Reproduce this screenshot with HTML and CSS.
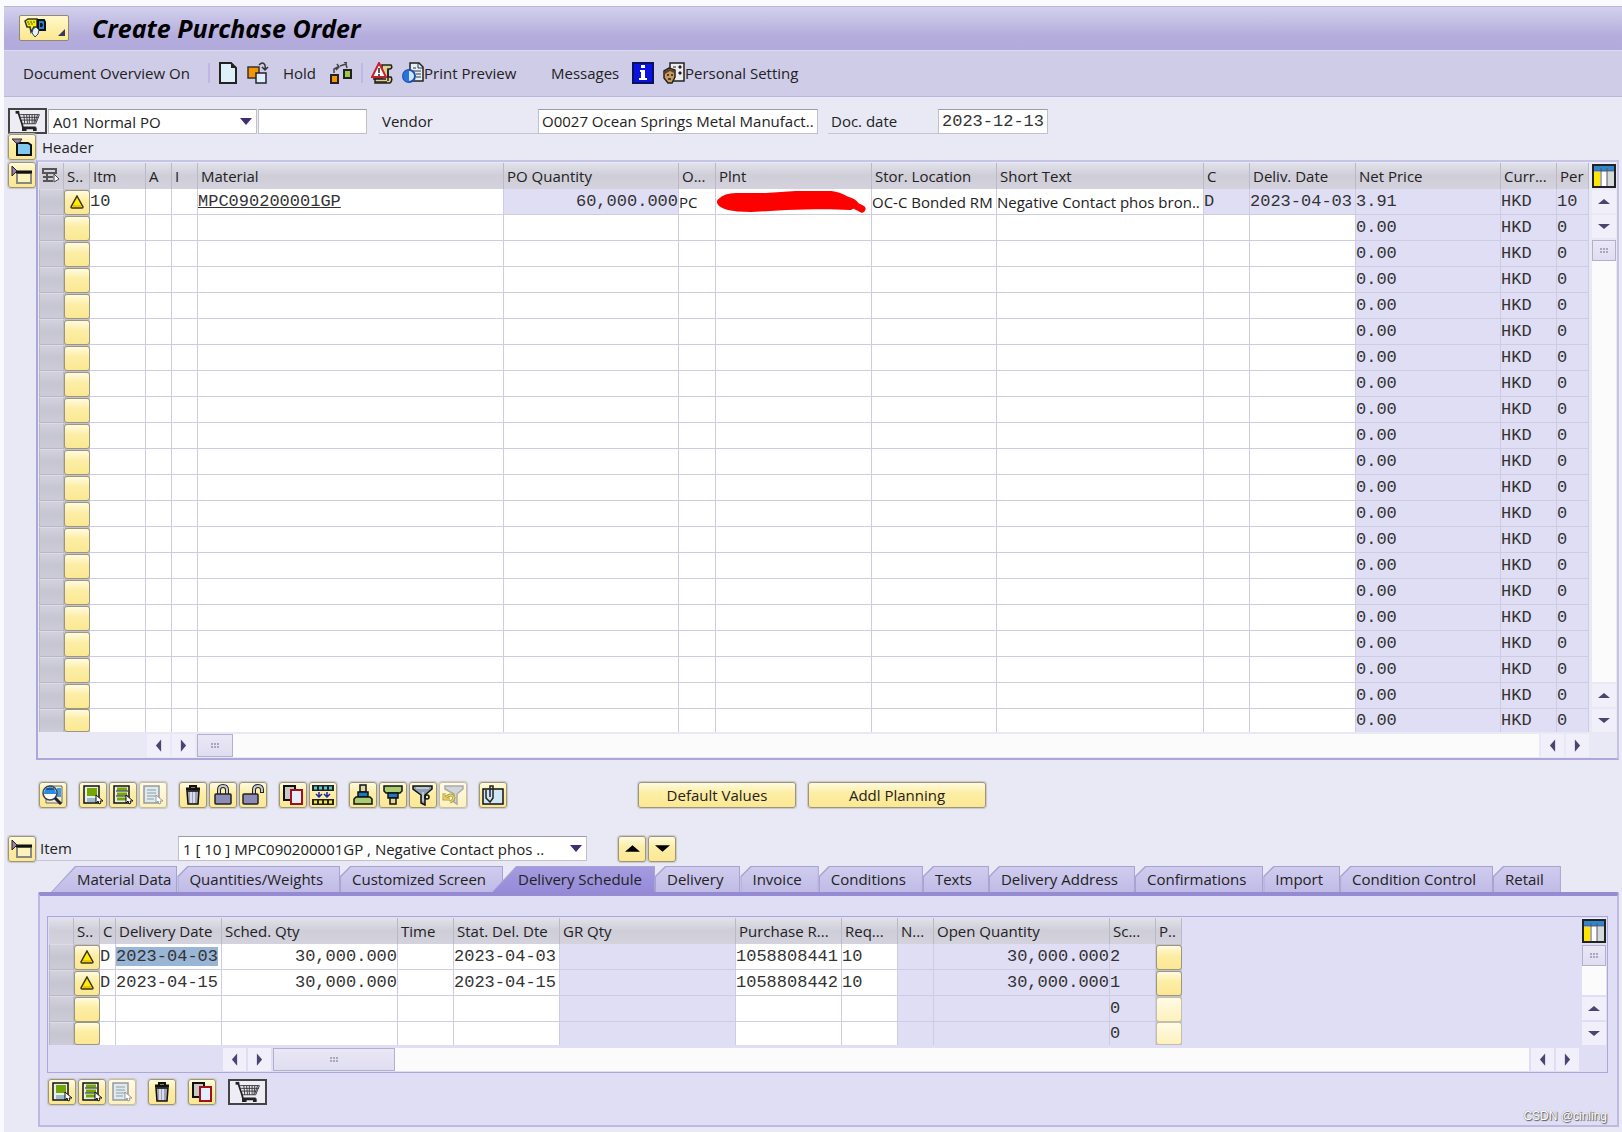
FILE: index.html
```html
<!DOCTYPE html>
<html lang="en">
<head>
  <meta charset="UTF-8">
  <meta name="viewport" content="width=device-width, initial-scale=1.0">
  <title>Create Purchase Order</title>
  <link rel="stylesheet" href="styles.css">
</head>
<body>
  <!-- icon set -->
  <svg class="sprite" aria-hidden="true">
    <symbol id="i-cursor" viewBox="0 0 8 11"><path d="M1 1v8l2-2 1 3 2-1-1-2h3z" fill="#fff" stroke="#111"/></symbol>
    <symbol id="i-services" viewBox="0 0 22 20">
      <path d="M1 3l3-2h9v8h-3l-3 5-1-5H3z" fill="#f5f000" stroke="#333" stroke-width="1.5"/>
      <path d="M3 4h8M4 6h6" stroke="#555" stroke-dasharray="2 1"/>
      <path d="M14 2h6l1 2v8h-7z" fill="#2a7de0" stroke="#111" stroke-width="2"/>
      <path d="M16 5h2l1 2-1 2h-2z" fill="#111"/>
      <path d="M9 11l3-2 3 3-1 4-3 3-3-4z" fill="#e8f2fa" stroke="#345"/>
    </symbol>
    <symbol id="i-new" viewBox="0 0 22 22"><path d="M3 1h11l5 5v15H3z" fill="#dff0f8" stroke="#222" stroke-width="2"/><path d="M14 1v5h5z" fill="#222"/></symbol>
    <symbol id="i-other" viewBox="0 0 22 22">
      <rect x="1" y="5" width="11" height="11" fill="#f79400" stroke="#333" stroke-width="1.5"/>
      <rect x="9" y="11" width="10" height="10" fill="#e3eefb" stroke="#223" stroke-width="1.5"/>
      <path d="M12 3c4-4 7-1 6 4M15 5l3 3 3-3" fill="none" stroke="#333" stroke-width="1.5"/>
    </symbol>
    <symbol id="i-check" viewBox="0 0 22 22">
      <rect x="1" y="13" width="7" height="8" fill="#f79400" stroke="#222" stroke-width="2"/>
      <rect x="14" y="8" width="7" height="8" fill="#9bc84a" stroke="#222" stroke-width="2"/>
      <path d="M4 11V7l4-2M7 2l2 3-3 3M10 4l6-2 1 4M14 0l3 1" fill="none" stroke="#444" stroke-width="1.5"/>
    </symbol>
    <symbol id="i-messages" viewBox="0 0 22 22">
      <path d="M11 3h9q2 3-1 4h-2v8h3q2 3-1 6H4v-5h7z" fill="#e0d28c" stroke="#222" stroke-width="1.5"/>
      <path d="M8 1l7 14H1z" fill="#fff" stroke="#c8202c" stroke-width="2"/>
      <path d="M8 6v5M8 12v2" stroke="#222" stroke-width="1.5"/>
      <path d="M2 17h13M4 20h12M17 7v12" stroke="#222" stroke-width="1.5"/>
    </symbol>
    <symbol id="i-preview" viewBox="0 0 22 22">
      <path d="M8 1h9l4 4v14H8z" fill="#e6f1f7" stroke="#222" stroke-width="1.5"/>
      <path d="M16 1v5h5M11 6h3M11 9h8M14 12h5M14 15h5" fill="none" stroke="#334"/>
      <circle cx="7" cy="14" r="6" fill="#cfe6fa" stroke="#1c4fae" stroke-width="2"/>
      <path d="M7 8a6 6 0 0 0 0 12z" fill="#2a74d8"/>
    </symbol>
    <symbol id="i-info" viewBox="0 0 22 22">
      <rect x="1" y="1" width="20" height="20" fill="#0a12e0" stroke="#0a1060" stroke-width="2"/>
      <path d="M9 3h4v3H9zM8 8h5v8h2v2H7v-2h2v-6H8z" fill="#fff"/>
    </symbol>
    <symbol id="i-personal" viewBox="0 0 22 22">
      <rect x="7" y="1" width="14" height="18" fill="#eee" stroke="#222" stroke-width="1.5"/>
      <path d="M10 5h3M16 4h2v2h-2zM16 10h2v2h-2z" fill="#222" stroke="#222"/>
      <path d="M1 9l5-3 6 2v7l-3 6H5l-4-5z" fill="#c99a5b" stroke="#222" stroke-width="1.5"/>
      <path d="M2 9l4-2 5 1v3l-4-2-5 3z" fill="#5c4426"/>
      <path d="M4 13h2M8 13h2M5 17h3" stroke="#222" stroke-width="1.5"/>
    </symbol>
    <symbol id="i-cart" viewBox="0 0 36 24">
      <rect x="5" y="1" width="4" height="3" fill="#222"/>
      <path d="M8 3l4 12 1 4h14" fill="none" stroke="#222" stroke-width="2"/>
      <path d="M10 5h21l-4 10H12M11 8h19M12 11h16M14 5l1 10M17 5l1 10M20 5v10M23 5v10M26 5l-1 10M29 5l-3 9" fill="none" stroke="#333" stroke-width="1"/>
      <path d="M12 19h16v4h-4v-2h-7v2h-5z" fill="#222"/>
    </symbol>
    <symbol id="i-expand" viewBox="0 0 22 20">
      <path d="M6 6h11l3 2v10H6z" fill="#7ec8f2" stroke="#111" stroke-width="2"/>
      <path d="M1 2h10l-3 4H5z" fill="#9a7fb5" stroke="#333"/>
    </symbol>
    <symbol id="i-collapse" viewBox="0 0 22 20">
      <path d="M6 8h14v10H6z" fill="#fdf3b8" stroke="#888" stroke-width="2"/>
      <path d="M5 7h16" stroke="#111" stroke-width="3"/>
      <path d="M1 1v10l5-5z" fill="#9a7fb5" stroke="#222"/>
    </symbol>
    <symbol id="i-selall" viewBox="0 0 18 18">
      <path d="M1 2h13v4H1zM1 10h10M1 14h10M5 6v8" fill="none" stroke="#555" stroke-width="2"/>
      <path d="M12 7l5 5-5 3z" fill="#fff" stroke="#444"/>
    </symbol>
    <symbol id="i-columns" viewBox="0 0 24 24">
      <rect x="1" y="1" width="22" height="22" fill="#fff" stroke="#222" stroke-width="2"/>
      <path d="M2 2h20v5H2z" fill="#2f86cc"/><path d="M2 8h6v14H2z" fill="#ffe600"/>
      <path d="M15 8h7v14h-7z" fill="#d5dadb"/>
      <path d="M9 4v18M15 4v18M2 7h20" stroke="#556"/>
    </symbol>
    <symbol id="i-warn" viewBox="0 0 16 14"><path d="M8 1l6 11q0 1-1 1H3q-1 0-1-1z" fill="#ffee00" stroke="#3a3320" stroke-width="1.5"/><path d="M4 11h8" stroke="#e09a00"/></symbol>
    <symbol id="i-detail" viewBox="0 0 22 22">
      <path d="M7 2h13v17H4v-5" fill="#f4ecc0" stroke="#667"/>
      <path d="M15 4h4v9h-4z" fill="#4a9ad8"/>
      <circle cx="8" cy="9" r="7" fill="#fff" stroke="#345" stroke-width="1.5"/>
      <path d="M2 9a6 6 0 0 1 12 0v1H2z" fill="#2a8ce0"/>
      <path d="M4 5h8" stroke="#124"/>
      <path d="M13 14l6 6" stroke="#223" stroke-width="3"/>
    </symbol>
    <symbol id="i-all" viewBox="0 0 22 22">
      <rect x="2" y="2" width="15" height="17" fill="#e8eef0" stroke="#111" stroke-width="1.5"/>
      <path d="M5 4h10v8H5z" fill="#74a800"/><path d="M5 15h9M5 17h9" stroke="#58a"/>
      <use href="#i-cursor" x="13" y="10" width="8" height="11"/>
    </symbol>
    <symbol id="i-block" viewBox="0 0 22 22">
      <rect x="2" y="2" width="15" height="17" fill="#e8eef0" stroke="#111" stroke-width="1.5"/>
      <path d="M5 5h10M5 10h10M5 15h9" stroke="#74a800" stroke-width="3"/>
      <path d="M4 7h12M4 12h12" stroke="#222"/>
      <use href="#i-cursor" x="13" y="10" width="8" height="11"/>
    </symbol>
    <symbol id="i-none" viewBox="0 0 22 22">
      <rect x="2" y="2" width="15" height="17" fill="#dfeaee" stroke="#999" stroke-width="1.5"/>
      <path d="M5 6h9M5 9h9M5 12h9M5 15h7" stroke="#a8b8c0" stroke-width="1.5"/>
      <path d="M14 11v8l2-2 1 3 2-1-1-2h3z" fill="#fff" stroke="#999"/>
    </symbol>
    <symbol id="i-trash" viewBox="0 0 22 22">
      <path d="M5 7h12l-1 13H6z" fill="#9fa3b4" stroke="#111" stroke-width="1.5"/>
      <path d="M9 8v11M12 8v11" stroke="#eef" stroke-width="1.5"/>
      <path d="M4 5h14" stroke="#111" stroke-width="3"/><path d="M8 4V2h6v2" fill="none" stroke="#111" stroke-width="2"/>
    </symbol>
    <symbol id="i-lock" viewBox="0 0 22 22">
      <path d="M7 10V6q0-4 4-4t4 4v4" fill="none" stroke="#222" stroke-width="4"/>
      <path d="M7 10V6q0-4 4-4t4 4v4" fill="none" stroke="#ccc" stroke-width="2"/>
      <rect x="3" y="10" width="16" height="10" rx="1" fill="#8d8bb8" stroke="#222" stroke-width="1.5"/>
    </symbol>
    <symbol id="i-unlock" viewBox="0 0 22 22">
      <path d="M12 10V6q0-4 4-4t4 4v3" fill="none" stroke="#222" stroke-width="4"/>
      <path d="M12 10V6q0-4 4-4t4 4v2" fill="none" stroke="#ccc" stroke-width="2"/>
      <rect x="1" y="10" width="15" height="10" rx="1" fill="#8d8bb8" stroke="#222" stroke-width="1.5"/>
    </symbol>
    <symbol id="i-copy" viewBox="0 0 22 22">
      <rect x="2" y="2" width="11" height="14" fill="#c8c8c8" stroke="#111" stroke-width="2"/>
      <rect x="9" y="6" width="11" height="14" fill="#e4eefb" stroke="#a30f1c" stroke-width="2"/>
    </symbol>
    <symbol id="i-distribute" viewBox="0 0 22 22">
      <path d="M0 1h22v6H0zM0 15h22v6H0z" fill="#222"/>
      <path d="M2 4h18" stroke="#58c8d8" stroke-width="3" stroke-dasharray="3 2"/>
      <path d="M2 18h18" stroke="#f4e83a" stroke-width="3" stroke-dasharray="3 2"/>
      <path d="M7 8v5M4 10l3 3 3-3M15 8v5M12 10l3 3 3-3" fill="none" stroke="#2222b0" stroke-width="1.5"/>
    </symbol>
    <symbol id="i-sortasc" viewBox="0 0 22 22">
      <rect x="8" y="1" width="6" height="7" fill="#ddd9a0" stroke="#111" stroke-width="1.5"/>
      <path d="M6 8h10v5H6z" fill="#1878c0" stroke="#111" stroke-width="1.5"/>
      <path d="M4 13h14l2 2v5H2v-5z" fill="#a8cc70" stroke="#111" stroke-width="1.5"/>
    </symbol>
    <symbol id="i-sortdesc" viewBox="0 0 22 22">
      <path d="M2 2h18v5l-2 2H4L2 7z" fill="#a8cc70" stroke="#111" stroke-width="1.5"/>
      <path d="M6 9h10v5H6z" fill="#1878c0" stroke="#111" stroke-width="1.5"/>
      <rect x="8" y="14" width="6" height="6" fill="#ddd9a0" stroke="#111" stroke-width="1.5"/>
    </symbol>
    <symbol id="i-filter" viewBox="0 0 22 22">
      <path d="M1 2h19v3l-7 6v10l-4-2v-8L1 5z" fill="#8fa0b4" stroke="#111" stroke-width="1.5"/>
      <path d="M4 4h13M11 8v9" stroke="#e8eef5"/><circle cx="15" cy="13" r="2" fill="none" stroke="#111" stroke-width="1.5"/>
    </symbol>
    <symbol id="i-unfilter" viewBox="0 0 22 22">
      <path d="M3 2h18v3l-6 5v10l-3-2v-8L3 5z" fill="#d3d6d8" stroke="#aaa" stroke-width="1.5"/>
      <path d="M2 9v6h6M3 14q7-6 9 0-1 3-4 4" fill="none" stroke="#b5a040" stroke-width="3"/>
      <path d="M2 9v6h6M3 14q7-6 9 0-1 3-4 4" fill="none" stroke="#f6ea80"/>
    </symbol>
    <symbol id="i-attach" viewBox="0 0 22 22">
      <path d="M1 5h20v15H1z" fill="#cfe6f4" stroke="#111" stroke-width="1.5"/>
      <path d="M4 6v8l4 4 3-4V2H8v11" fill="none" stroke="#222" stroke-width="1.5"/>
    </symbol>
    <symbol id="a-up" viewBox="0 0 14 8"><path d="M0 7L7 1l7 6z"/></symbol>
    <symbol id="a-down" viewBox="0 0 14 8"><path d="M0 1l7 6 7-6z"/></symbol>
    <symbol id="a-left" viewBox="0 0 8 14"><path d="M7 0L1 7l6 7z"/></symbol>
    <symbol id="a-right" viewBox="0 0 8 14"><path d="M1 0l6 7-6 7z"/></symbol>
  </svg>

  <div class="window">
    <header class="titlebar">
      <button class="menu-btn" aria-label="Services"><svg class="services"><use href="#i-services"/></svg><span class="corner"></span></button>
      <h1>Create Purchase Order</h1>
    </header>

    <nav class="toolbar">
      <button class="t-overview">Document Overview On</button>
      <span class="sep"></span>
      <button aria-label="Create" class="t-new"><svg class="icon"><use href="#i-new"/></svg></button>
      <button aria-label="Other purchase order" class="t-other"><svg class="icon"><use href="#i-other"/></svg></button>
      <button class="t-hold">Hold</button>
      <button aria-label="Check" class="t-check"><svg class="icon"><use href="#i-check"/></svg></button>
      <span class="sep"></span>
      <button aria-label="Display messages" class="t-msg"><svg class="icon"><use href="#i-messages"/></svg></button>
      <button class="t-preview"><svg class="icon"><use href="#i-preview"/></svg>Print Preview</button>
      <button class="t-messages">Messages</button>
      <button aria-label="Help" class="t-info"><svg class="icon"><use href="#i-info"/></svg></button>
      <button class="t-personal"><svg class="icon"><use href="#i-personal"/></svg>Personal Setting</button>
    </nav>

    <main>
      <form class="order-line">
        <button type="button" class="cart-btn" aria-label="Purchase order"><svg><use href="#i-cart"/></svg></button>
        <select class="order-type" aria-label="Order type"><option>A01 Normal PO</option></select>
        <input class="order-no" type="text" aria-label="Order number">
        <label class="vendor-label" for="vendor">Vendor</label>
        <input class="vendor" id="vendor" type="text" value="O0027 Ocean Springs Metal Manufact..">
        <label class="date-label" for="docDate">Doc. date</label>
        <input class="doc-date mono" id="docDate" type="text" value="2023-12-13">
      </form>

      <div class="header-line">
        <button class="btn" aria-label="Expand header"><svg class="icon"><use href="#i-expand"/></svg></button>
        <span>Header</span>
      </div>

      <section class="overview">
        <button class="btn" aria-label="Collapse items"><svg class="icon"><use href="#i-collapse"/></svg></button>
        <div class="frame">
          <div class="grid">
            <table class="items">
              <colgroup>
                <col class="w25"><col class="w26"><col class="w56"><col class="w26"><col class="w26"><col><col class="w175"><col class="w37"><col class="w156"><col class="w125"><col class="w207"><col class="w46"><col class="w106"><col class="w145"><col class="w56"><col class="w32">
              </colgroup>
              <thead>
                <tr>
                  <th><svg class="selall"><use href="#i-selall"/></svg></th><th>S..</th><th>Itm</th><th>A</th><th>I</th><th>Material</th><th>PO Quantity</th><th>O...</th><th>Plnt</th><th>Stor. Location</th><th>Short Text</th><th>C</th><th>Deliv. Date</th><th>Net Price</th><th>Curr...</th><th>Per</th>
                </tr>
              </thead>
              <tbody id="itemRows">
                <tr>
                  <td class="row-head"></td>
                  <td class="status"><button aria-label="Warning"><svg><use href="#i-warn"/></svg></button></td>
                  <td class="mono">10</td><td></td><td></td>
                  <td class="mono"><a href="#">MPC090200001GP</a></td>
                  <td class="mono num ro">60,000.000</td>
                  <td>PC</td>
                  <td><svg class="redacted" viewBox="0 0 152 24"><path d="M120 8Q138 10 140 16L146 19" fill="none" stroke="#f00" stroke-width="7" stroke-linecap="round"/><path d="M5 12Q10 7 20 7H50L80 5H115Q130 7 134 16L108 15L70 16L35 18Q8 18 5 12z" fill="#f00" stroke="#f00" stroke-width="8" stroke-linejoin="round"/></svg></td>
                  <td>OC-C Bonded RM</td><td>Negative Contact phos bron..</td>
                  <td class="mono ro">D</td><td class="mono ro">2023-04-03</td><td class="mono ro">3.91</td><td class="mono ro">HKD</td><td class="mono ro">10</td>
                </tr>
              </tbody>
            </table>
            <div class="vscroll">
              <button class="config" aria-label="Table settings"><svg><use href="#i-columns"/></svg></button>
              <button aria-label="Page up"><svg class="v"><use href="#a-up"/></svg></button>
              <button aria-label="Line down"><svg class="v"><use href="#a-down"/></svg></button>
              <div class="track"><div class="thumb"><span></span></div></div>
              <button aria-label="Line up"><svg class="v"><use href="#a-up"/></svg></button>
              <button aria-label="Page down"><svg class="v"><use href="#a-down"/></svg></button>
            </div>
          </div>
          <div class="hscroll">
            <button aria-label="Scroll left"><svg class="h"><use href="#a-left"/></svg></button>
            <button aria-label="Scroll right"><svg class="h"><use href="#a-right"/></svg></button>
            <div class="track"><div class="thumb"><span></span></div></div>
            <button aria-label="Scroll left"><svg class="h"><use href="#a-left"/></svg></button>
            <button aria-label="Scroll right"><svg class="h"><use href="#a-right"/></svg></button>
          </div>
        </div>
      </section>

      <div class="actions">
        <div class="group"><button class="btn" aria-label="Details"><svg class="icon"><use href="#i-detail"/></svg></button></div>
        <div class="group">
          <button class="btn" aria-label="Select all"><svg class="icon"><use href="#i-all"/></svg></button>
          <button class="btn" aria-label="Select block"><svg class="icon"><use href="#i-block"/></svg></button>
          <button class="btn off" aria-label="Deselect all"><svg class="icon"><use href="#i-none"/></svg></button>
        </div>
        <div class="group">
          <button class="btn" aria-label="Delete"><svg class="icon"><use href="#i-trash"/></svg></button>
          <button class="btn" aria-label="Lock"><svg class="icon"><use href="#i-lock"/></svg></button>
          <button class="btn" aria-label="Unlock"><svg class="icon"><use href="#i-unlock"/></svg></button>
        </div>
        <div class="group">
          <button class="btn" aria-label="Copy"><svg class="icon"><use href="#i-copy"/></svg></button>
          <button class="btn" aria-label="Distribute"><svg class="icon"><use href="#i-distribute"/></svg></button>
        </div>
        <div class="group">
          <button class="btn" aria-label="Sort ascending"><svg class="icon"><use href="#i-sortasc"/></svg></button>
          <button class="btn" aria-label="Sort descending"><svg class="icon"><use href="#i-sortdesc"/></svg></button>
          <button class="btn" aria-label="Filter"><svg class="icon"><use href="#i-filter"/></svg></button>
          <button class="btn off" aria-label="Delete filter"><svg class="icon"><use href="#i-unfilter"/></svg></button>
        </div>
        <div class="group"><button class="btn" aria-label="Attachments"><svg class="icon"><use href="#i-attach"/></svg></button></div>
        <button class="btn wide defaults">Default Values</button>
        <button class="btn wide planning">Addl Planning</button>
      </div>

      <div class="item-line">
        <button class="btn" aria-label="Collapse item"><svg class="icon"><use href="#i-collapse"/></svg></button>
        <label for="itemSelect">Item</label>
        <select id="itemSelect"><option>1 [ 10 ] MPC090200001GP , Negative Contact phos ..</option></select>
        <div class="group">
          <button class="btn" aria-label="Previous item"><svg class="nav"><use href="#a-up"/></svg></button>
          <button class="btn" aria-label="Next item"><svg class="nav"><use href="#a-down"/></svg></button>
        </div>
      </div>

      <section class="detail">
        <div class="tabs">
          <button class="first">Material Data</button><button>Quantities/Weights</button><button>Customized Screen</button><button class="active">Delivery Schedule</button><button>Delivery</button><button>Invoice</button><button>Conditions</button><button>Texts</button><button>Delivery Address</button><button>Confirmations</button><button>Import</button><button>Condition Control</button><button>Retail</button>
        </div>
        <div class="panel">
          <div class="frame">
            <div class="grid">
              <table class="schedule">
                <colgroup>
                  <col class="w25"><col class="w26"><col class="w16"><col class="w106"><col class="w176"><col class="w56"><col class="w106"><col class="w176"><col class="w106"><col class="w56"><col class="w36"><col class="w176"><col class="w46"><col class="w26">
                </colgroup>
                <thead>
                  <tr>
                    <th></th><th>S..</th><th>C</th><th>Delivery Date</th><th>Sched. Qty</th><th>Time</th><th>Stat. Del. Dte</th><th>GR Qty</th><th>Purchase R...</th><th>Req...</th><th>N...</th><th>Open Quantity</th><th>Sc...</th><th>P..</th>
                  </tr>
                </thead>
                <tbody>
                  <tr>
                    <td class="row-head"></td><td class="status"><button aria-label="Warning"><svg><use href="#i-warn"/></svg></button></td>
                    <td class="mono">D</td><td class="mono"><mark>2023-04-03</mark></td><td class="mono num">30,000.000</td><td></td><td class="mono">2023-04-03</td><td class="ro"></td><td class="mono">1058808441</td><td class="mono">10</td><td class="ro"></td><td class="mono num ro">30,000.000</td><td class="mono ro">2</td>
                    <td class="status ro"><button aria-label="Parameters"></button></td>
                  </tr>
                  <tr>
                    <td class="row-head"></td><td class="status"><button aria-label="Warning"><svg><use href="#i-warn"/></svg></button></td>
                    <td class="mono">D</td><td class="mono">2023-04-15</td><td class="mono num">30,000.000</td><td></td><td class="mono">2023-04-15</td><td class="ro"></td><td class="mono">1058808442</td><td class="mono">10</td><td class="ro"></td><td class="mono num ro">30,000.000</td><td class="mono ro">1</td>
                    <td class="status ro"><button aria-label="Parameters"></button></td>
                  </tr>
                  <tr>
                    <td class="row-head"></td><td class="status"><button aria-label="Status"></button></td>
                    <td></td><td></td><td></td><td></td><td></td><td class="ro"></td><td></td><td></td><td class="ro"></td><td class="ro"></td><td class="mono ro">0</td>
                    <td class="status ro"><button class="off" aria-label="Parameters"></button></td>
                  </tr>
                  <tr>
                    <td class="row-head"></td><td class="status"><button aria-label="Status"></button></td>
                    <td></td><td></td><td></td><td></td><td></td><td class="ro"></td><td></td><td></td><td class="ro"></td><td class="ro"></td><td class="mono ro">0</td>
                    <td class="status ro"><button class="off" aria-label="Parameters"></button></td>
                  </tr>
                </tbody>
              </table>
              <div class="vscroll">
                <button class="config" aria-label="Table settings"><svg><use href="#i-columns"/></svg></button>
                <div class="track"><div class="thumb"><span></span></div></div>
                <button aria-label="Line up"><svg class="v"><use href="#a-up"/></svg></button>
                <button aria-label="Line down"><svg class="v"><use href="#a-down"/></svg></button>
              </div>
            </div>
            <div class="hscroll">
              <button aria-label="Scroll left"><svg class="h"><use href="#a-left"/></svg></button>
              <button aria-label="Scroll right"><svg class="h"><use href="#a-right"/></svg></button>
              <div class="track"><div class="thumb"><span></span></div></div>
              <button aria-label="Scroll left"><svg class="h"><use href="#a-left"/></svg></button>
              <button aria-label="Scroll right"><svg class="h"><use href="#a-right"/></svg></button>
            </div>
          </div>
          <div class="actions">
            <div class="group">
              <button class="btn" aria-label="Select all"><svg class="icon"><use href="#i-all"/></svg></button>
              <button class="btn" aria-label="Select block"><svg class="icon"><use href="#i-block"/></svg></button>
              <button class="btn off" aria-label="Deselect all"><svg class="icon"><use href="#i-none"/></svg></button>
            </div>
            <button class="btn" aria-label="Delete"><svg class="icon"><use href="#i-trash"/></svg></button>
            <button class="btn" aria-label="Copy"><svg class="icon"><use href="#i-copy"/></svg></button>
            <button class="cart-btn" aria-label="Purchase requisition"><svg><use href="#i-cart"/></svg></button>
          </div>
        </div>
      </section>
    </main>
    <span class="credit">CSDN @cinling</span>
  </div>

  <script>
    const itemRows = document.getElementById('itemRows');

    // empty entry rows below the first item
    for (let i = 0; i < 20; i++) {
      itemRows.insertAdjacentHTML('beforeend', `
        <tr>
          <td class="row-head"></td>
          <td class="status"><button aria-label="Status"></button></td>
          ${'<td></td>'.repeat(11)}
          <td class="mono ro">0.00</td><td class="mono ro">HKD</td><td class="mono ro">0</td>
        </tr>
      `);
    }
  </script>
</body>
</html>
```
FILE: styles.css
```css
* {
  box-sizing: border-box;
}

body {
  margin: 0;
  padding: 6px 0 0 4px;
  background-color: #fafafe;
  color: #222;
  font-family: "Open Sans", "Noto Sans", sans-serif;
  font-size: 15px;
  line-height: 24px;
}

button, input, select {
  font: inherit;
  color: inherit;
  margin: 0;
}

button {
  padding: 0;
  border: none;
  background: none;
  cursor: pointer;
  white-space: nowrap;
}

svg {
  display: block;
  flex: none;
}

.sprite {
  position: absolute;
  width: 0;
  height: 0;
}

.icon {
  width: 22px;
  height: 22px;
}

.window {
  position: relative;
  min-height: calc(100vh - 6px);
  background-color: #e9e9f5;
}

.mono {
  color: #333;
  font-family: "Liberation Mono", monospace;
  font-size: 17px;
}

/* title and toolbar */
.titlebar {
  display: flex;
  align-items: center;
  gap: 23px;
  height: 44px;
  padding: 0 15px 2px;
  border-top: 1px solid #b9b4dc;
  background: linear-gradient(#d3d0ec, #b3acdc 70%, #b1aadb);
}

h1 {
  margin: 0;
  font-size: 25px;
  font-style: italic;
  line-height: 32px;
  color: #000;
}

.menu-btn {
  display: flex;
  justify-content: space-between;
  align-items: center;
  width: 50px;
  height: 26px;
  padding: 0 3px;
  border: 1px solid #8f8a78;
  border-radius: 2px;
  background: linear-gradient(#fff8cc, #fbe88e);
}

.services {
  width: 24px;
  height: 20px;
}

.corner {
  align-self: flex-end;
  margin-bottom: 4px;
  border-left: 7px solid transparent;
  border-bottom: 7px solid #3c3560;
}

.toolbar {
  display: flex;
  align-items: center;
  height: 47px;
  padding: 0 19px 1px;
  border-top: 1px solid #dddaf0;
  border-bottom: 1px solid #b9b5dd;
  background-color: #cfcce8;
}

.toolbar button {
  display: flex;
  align-items: center;
}

.sep {
  width: 2px;
  height: 20px;
  background-color: #bdb8e4;
}

.t-overview { width: 185px; }
.t-new { margin-left: 7px; }
.t-other { margin-left: 8px; }
.t-hold { width: 47px; margin-left: 14px; }
.t-check { margin-right: 9px; }
.t-msg { margin-left: 8px; }
.t-preview { width: 149px; margin-left: 9px; }
.t-messages { width: 81px; }
.t-personal { margin-left: 9px; }

/* yellow push buttons */
.btn, .status button {
  display: flex;
  justify-content: center;
  align-items: center;
  border: 1px solid #9b9682;
  border-radius: 3px;
  background: linear-gradient(#fffbe0, #fdeea6 40%, #fbe893);
  box-shadow: 0 0 1px 1px #c9c6c4;
}

.btn {
  width: 28px;
  height: 26px;
  flex: none;
}

.off, .status .off {
  border-color: #c4bfa6;
  background: linear-gradient(#fffbe6, #fdf1bd);
}

.btn.wide {
  width: 158px;
}

/* order header fields */
main {
  padding: 11px 3px 0 4px;
}

.order-line, .header-line, .item-line, .actions, .group {
  display: flex;
  align-items: center;
}

.order-line {
  height: 26px;
}

.cart-btn {
  width: 39px;
  height: 26px;
  flex: none;
  border: 2px solid #444;
  background-color: #eeedf6;
}

.cart-btn svg {
  width: 35px;
  height: 22px;
}

input, select {
  height: 25px;
  padding: 0 3px;
  border: 1px solid #c2c1cb;
  border-top-color: #9d9ca6;
  border-radius: 0;
  background-color: #fff;
}

select {
  appearance: none;
  padding: 0 24px 0 4px;
  background-image: url("data:image/svg+xml,%3Csvg xmlns='http://www.w3.org/2000/svg' width='12' height='7'%3E%3Cpath d='M0 0h12L6 7z' fill='%233f2d75'/%3E%3C/svg%3E");
  background-repeat: no-repeat;
  background-position: right 4px center;
}

.order-type { width: 209px; margin-left: 1px; }
.order-no { width: 109px; margin-left: 1px; }
.vendor { width: 280px; }
.doc-date { width: 110px; }

.vendor-label, .date-label {
  height: 25px;
  padding-left: 3px;
  border-bottom: 1px solid #c6c5d0;
}

.vendor-label { width: 159px; margin-left: 12px; }
.date-label { width: 110px; margin-left: 10px; }

.header-line {
  height: 26px;
  gap: 6px;
}

/* table frames */
.overview {
  display: flex;
  align-items: flex-start;
}

.overview > .btn {
  margin-top: 2px;
}

.frame {
  flex: 1;
  min-width: 0;
  padding: 1px;
  border: 2px solid #c6c3e6;
  border-left-color: #aca7d8;
  border-bottom-color: #aca7d8;
}

.grid {
  display: flex;
}

table {
  flex: none;
  border-spacing: 0;
  table-layout: fixed;
}

.items {
  flex: 1;
  width: 100%;
  min-width: 0;
}

.schedule {
  width: 1133px;
  margin-right: auto;
}

.w16 { width: 16px; }
.w25 { width: 25px; }
.w26 { width: 26px; }
.w32 { width: 32px; }
.w36 { width: 36px; }
.w37 { width: 37px; }
.w46 { width: 46px; }
.w56 { width: 56px; }
.w106 { width: 106px; }
.w125 { width: 125px; }
.w145 { width: 145px; }
.w156 { width: 156px; }
.w175 { width: 175px; }
.w176 { width: 176px; }
.w207 { width: 207px; }

th {
  height: 26px;
  padding: 0 0 0 3px;
  border-right: 1px solid #bab9c8;
  background: linear-gradient(#e2e2ea, #cecdd8 50%, #d4d3dd);
  font-weight: normal;
  text-align: left;
  white-space: nowrap;
  overflow: hidden;
}

td {
  height: 26px;
  padding: 0;
  border-right: 1px solid #cdcce0;
  border-bottom: 1px solid #cdcce0;
  background-color: #fff;
  white-space: nowrap;
  overflow: hidden;
}

th, td {
  line-height: 22px;
}

td.mono {
  padding-top: 1px;
}

tbody tr:last-child td {
  height: 23px;
  line-height: 20px;
  border-bottom: none;
}

td.ro {
  background-color: #e0def4;
}

td.num {
  text-align: right;
}

td.row-head {
  border: 1px solid #b9b8c6;
  border-top-color: #dddce6;
  background: linear-gradient(#d2d1dc, #c6c5d2 50%, #cccbd7);
}

td.status {
  border: none;
  background-color: #c4c2cc;
}

.status button {
  width: 100%;
  height: 25px;
  box-shadow: none;
}

tbody tr:last-child .status button {
  height: 23px;
}

.status svg {
  width: 16px;
  height: 14px;
}

td a {
  color: inherit;
}

mark {
  background-color: #9ab6d6;
  color: inherit;
}

.selall {
  width: 18px;
  height: 18px;
}

.redacted {
  width: 152px;
  height: 24px;
}

/* scroll bars */
.vscroll {
  display: flex;
  flex-direction: column;
  gap: 2px;
  width: 24px;
  margin-left: 3px;
}

.vscroll button, .hscroll button {
  display: flex;
  justify-content: center;
  align-items: center;
  width: 24px;
  height: 23px;
  flex: none;
  background-color: #f1effa;
  fill: #4a4570;
}

.hscroll button {
  width: 23px;
}

.vscroll .config {
  height: 25px;
}

.config svg {
  width: 24px;
  height: 24px;
}

.v {
  width: 12px;
  height: 7px;
}

.h {
  width: 7px;
  height: 13px;
}

.track {
  flex: 1;
  background-color: #fbfbfc;
}

.thumb {
  display: flex;
  justify-content: center;
  align-items: center;
  height: 21px;
  border: 1px solid #b3b0cc;
  background: linear-gradient(#eae8f6, #dfddf0);
}

.thumb span {
  width: 9px;
  height: 6px;
  background: radial-gradient(circle at 1px 1px, #a9a6c2 1px, transparent 1px) 0 0 / 3px 3px;
}

.hscroll {
  display: flex;
  gap: 2px;
  height: 23px;
  margin: 2px 27px 0 108px;
}

.hscroll .thumb {
  width: 36px;
  height: 23px;
}

/* action buttons */
.actions {
  gap: 12px;
  padding: 22px 0 0 31px;
}

.group {
  gap: 2px;
}

.defaults {
  margin-left: 119px;
}

.btn.planning {
  width: 178px;
}

.item-line {
  height: 27px;
  margin-top: 27px;
}

.item-line label {
  width: 142px;
  padding-left: 4px;
  border-bottom: 1px solid #c6c5d0;
}

.item-line select {
  width: 409px;
  margin-right: 31px;
}

.nav {
  width: 15px;
  height: 9px;
}

/* item detail */
.detail {
  margin: 4px 0 0 30px;
}

.tabs {
  display: flex;
  padding-left: 13px;
}

.tabs button {
  position: relative;
  z-index: 0;
  height: 26px;
  padding: 0 17px 0 12px;
  background-color: #a7a2d2;
  clip-path: polygon(0 10px, 10px 0, 100% 0, 100% 100%, 0 100%);
}

.tabs button::before {
  content: "";
  position: absolute;
  z-index: -1;
  inset: 1px 1px 0;
  background: linear-gradient(#d0ccee, #c0bbe6);
  clip-path: polygon(0 10px, 10px 0, 100% 0, 100% 100%, 0 100%);
}

.tabs .first, .tabs .active {
  padding: 0 6px 0 26px;
  clip-path: polygon(0 100%, 24px 0, 100% 0, 100% 100%);
}

.tabs .first::before, .tabs .active::before {
  clip-path: polygon(0 100%, 24px 0, 100% 0, 100% 100%);
}

.tabs .active {
  margin-left: -11px;
  padding-right: 13px;
}

.tabs .active::before {
  background: linear-gradient(#a49bdf, #968bd9);
}

.panel {
  padding: 20px 9px 20px 7px;
  border: 2px solid #bdb9e3;
  border-top: 4px solid #968bd3;
  border-radius: 2px 2px 0 0;
  background-color: #e0def4;
}

.panel .frame {
  border-width: 1px;
  border-color: #aca7d8;
}

.panel .hscroll {
  margin-top: 3px;
  margin-left: 174px;
}

.panel .hscroll .thumb {
  width: 122px;
}

.panel .actions {
  padding: 6px 0 0 1px;
}

.credit {
  position: absolute;
  right: 15px;
  bottom: 6px;
  color: #fff;
  font-family: "Liberation Sans", sans-serif;
  font-size: 12px;
  line-height: 20px;
  text-shadow: 1px 1px 1px #555, 0 0 1px #777;
}
```
